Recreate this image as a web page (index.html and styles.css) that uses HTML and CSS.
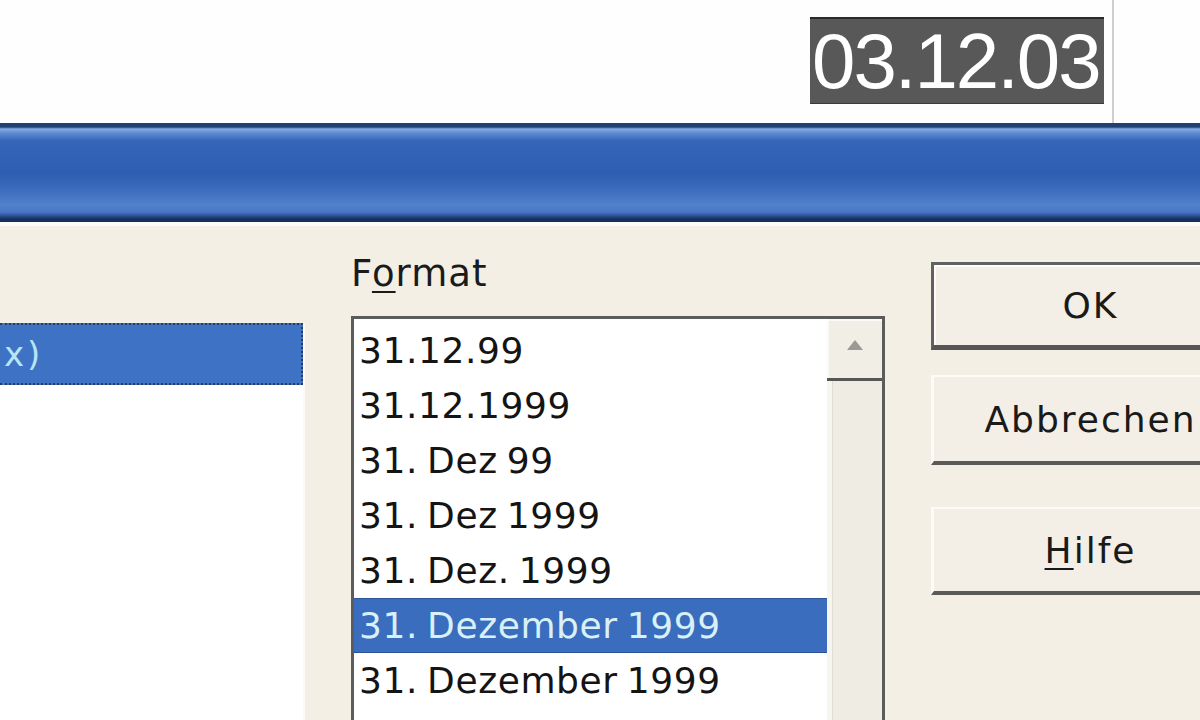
FILE: index.html
```html
<!DOCTYPE html>
<html lang="de">
<head>
<meta charset="utf-8">
<title>Datumsformat</title>
<link rel="stylesheet" href="styles.css">
</head>
<body>
<div class="screen">
  <div class="sheet">
    <div class="cell-date">03.12.03</div>
    <div class="gridline"></div>
  </div>
  <div class="titlebar"></div>
  <div class="dialog">
    <div class="leftcol">
      <div class="leftlist">
        <div class="left-sel"><span class="left-sel-text">x)</span></div>
      </div>
    </div>
    <div class="fmtcol">
      <div class="fmt-label">F<span class="mn">o</span>rmat</div>
      <div class="listbox">
        <div class="items">
          <div class="item">31.12.99</div>
          <div class="item">31.12.1999</div>
          <div class="item">31. Dez 99</div>
          <div class="item">31. Dez 1999</div>
          <div class="item">31. Dez. 1999</div>
          <div class="item selected">31. Dezember 1999</div>
          <div class="item">31. Dezember 1999</div>
        </div>
        <div class="scrollbar">
          <div class="sb-up">
            <svg class="sb-arrow" width="18" height="12" viewBox="0 0 18 12"><polygon points="9,1 17,11 1,11" fill="#9a9a96"/></svg>
          </div>
          <div class="sb-track"></div>
        </div>
      </div>
    </div>
    <div class="btncol">
      <div class="btn btn-default">OK</div>
      <div class="btn btn-cancel">Abbrechen</div>
      <div class="btn btn-help"><span class="mn">H</span>ilfe</div>
    </div>
  </div>
</div>
</body>
</html>
```
FILE: styles.css
```css
html, body {
  margin: 0;
  padding: 0;
  background: #ffffff;
}
body {
  width: 1200px;
  height: 720px;
  overflow: hidden;
  font-family: "DejaVu Sans", "Liberation Sans", sans-serif;
}
.screen {
  width: 1200px;
  height: 720px;
  overflow: hidden;
  display: flex;
  flex-direction: column;
}

/* spreadsheet area */
.sheet {
  height: 123px;
  flex: none;
  background: #fefefe;
  display: flex;
  justify-content: flex-end;
  padding-right: 86px;
}
.cell-date {
  margin-top: 17px;
  width: 292px;
  height: 84px;
  padding-left: 2px;
  background: #585858;
  border-top: 2px solid #2a2a2a;
  border-bottom: 1px solid #3a3a3a;
  color: #ffffff;
  font-family: "Liberation Sans", Arial, sans-serif;
  font-size: 78px;
  line-height: 84px;
  letter-spacing: -2px;
  white-space: nowrap;
}
.gridline {
  width: 2px;
  margin-left: 8px;
  background: #cfcfcf;
}

/* title bar */
.titlebar {
  height: 99px;
  flex: none;
  background: linear-gradient(to bottom,
    #213f73 0px, #213f73 4px,
    #86aee2 6px, #5e8bd2 10px,
    #3565b8 18px, #2e5eb1 50px,
    #3a69bc 64px, #5280cb 82px,
    #4a76c4 89px, #2b4f92 93px,
    #172f5c 96px, #172f5c 99px);
}

/* dialog body */
.dialog {
  flex: 1;
  display: flex;
  align-items: stretch;
  background: #f4efe5;
  border-top: 4px solid #fbfaf6;
  color: #1b1b1b;
}

.leftcol {
  width: 305px;
  flex: none;
  padding-top: 97px;
  display: flex;
  flex-direction: column;
}
.leftlist {
  flex: 1;
  background: #ffffff;
  border-right: 2px solid #fbfaf5;
}
.left-sel {
  height: 58px;
  background: #3d72c4;
  border: 2px dotted #2c3c58;
  border-left: none;
  display: flex;
  align-items: center;
}
.left-sel-text {
  color: #b8e4f4;
  font-size: 34px;
  margin-left: 4px;
  letter-spacing: 3px;
}

.fmtcol {
  width: 534px;
  flex: none;
  margin-left: 46px;
  display: flex;
  flex-direction: column;
}
.fmt-label {
  margin-top: 26px;
  margin-bottom: 20px;
  height: 44px;
  font-size: 37px;
  line-height: 44px;
  padding-left: 0px;
  letter-spacing: 1px;
}
.mn {
  text-decoration: underline;
  text-decoration-thickness: 2px;
  text-underline-offset: 5px;
}
.listbox {
  flex: 1;
  display: flex;
  border: 3px solid #5c5c5c;
  border-bottom: none;
  background: #ffffff;
}
.items {
  width: 473px;
  flex: none;
  padding-top: 4px;
}
.item {
  height: 55px;
  box-sizing: border-box;
  line-height: 55px;
  padding-left: 5px;
  font-size: 36px;
  letter-spacing: 0.6px;
  word-spacing: -3px;
  white-space: nowrap;
  color: #141414;
}
.item.selected {
  background: #3a6dbd;
  border-top: 1px solid #2c5597;
  border-bottom: 1px solid #2c5597;
  line-height: 53px;
  color: #d8f0f8;
}
.scrollbar {
  width: 55px;
  flex: none;
  display: flex;
  flex-direction: column;
  background: #eeebe2;
}
.sb-up {
  height: 59px;
  flex: none;
  background: #f1eee6;
  border-bottom: 3px solid #575757;
  box-shadow: inset 2px 2px 0 #fbfaf7;
  display: flex;
  align-items: center;
  justify-content: center;
}
.sb-arrow {
  display: block;
  margin-top: -8px;
}
.sb-track {
  flex: 1;
  background: #efece3;
  box-shadow: inset 5px 0 0 #f7f5ef, inset 6px 0 0 #e2ded3;
}

.btncol {
  flex: none;
  margin-left: 46px;
  padding-top: 36px;
  display: flex;
  flex-direction: column;
}
.btn {
  width: 316px;
  height: 88px;
  box-sizing: border-box;
  background: #f3efe6;
  display: flex;
  align-items: center;
  justify-content: center;
  font-size: 36px;
  letter-spacing: 2px;
  color: #1a1a1a;
  flex: none;
}
.btn-default {
  border: 3px solid #616161;
  border-bottom: 5px solid #555555;
  border-right: none;
  box-shadow: inset 2px 2px 0 #fdfcf9;
  margin-bottom: 25px;
}
.btn-cancel {
  height: 90px;
  border-top: 2px solid #fcfbf7;
  border-left: 3px solid #fcfbf7;
  border-bottom: 4px solid #5a5a57;
  margin-bottom: 42px;
}
.btn-help {
  border-top: 2px solid #fcfbf7;
  border-left: 3px solid #fcfbf7;
  border-bottom: 4px solid #5a5a57;
}
```
